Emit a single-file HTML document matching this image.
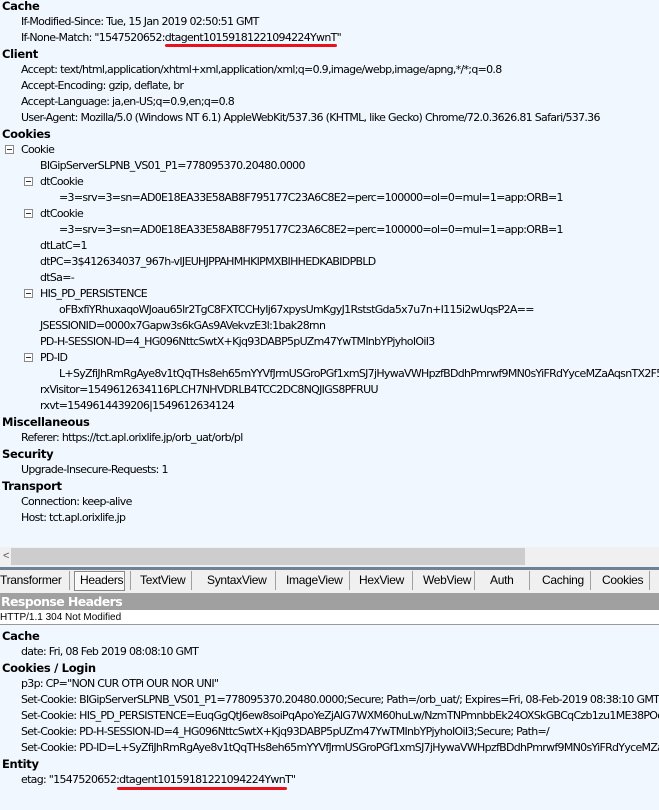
<!DOCTYPE html>
<html><head><meta charset="utf-8"><style>
*{margin:0;padding:0;box-sizing:border-box}
html,body{width:659px;height:810px;overflow:hidden}
body{background:#f0f7ff;font-family:"DejaVu Sans","Liberation Sans",sans-serif;font-size:11px;color:#000;position:relative}
#wrap{position:absolute;left:0;top:0;width:659px;height:810px;overflow:hidden}
.l{position:absolute;white-space:nowrap;line-height:16px;height:16px;letter-spacing:-0.7px}
.b{font-weight:bold;font-size:11.5px;letter-spacing:-0.3px}
.box{position:absolute;width:9px;height:9px;border:1px solid #8a8a8a;background:#fff}
.box:after{content:"";position:absolute;left:1px;top:3px;width:5px;height:1px;background:#333}
.red{position:absolute;height:3px;background:#e8121c;border-radius:2px}
.tab{position:absolute;top:569px;line-height:22px;font-family:"Liberation Sans",sans-serif;font-size:12px;letter-spacing:-0.3px}
.sep{position:absolute;top:571px;width:1px;height:19px;background:#a0a0a0}
</style></head><body><div id="wrap">
<div class="l b" style="left:2px;top:-2px">Cache</div>
<div class="l" style="left:21px;top:14px">If-Modified-Since: Tue, 15 Jan 2019 02:50:51 GMT</div>
<div class="l" style="left:21px;top:30px">If-None-Match: "1547520652:dtagent10159181221094224YwnT"</div>
<div class="red" style="left:165px;top:44px;width:172px"></div>
<div class="l b" style="left:2px;top:46px">Client</div>
<div class="l" style="left:21px;top:62px">Accept: text/html,application/xhtml+xml,application/xml;q=0.9,image/webp,image/apng,*/*;q=0.8</div>
<div class="l" style="left:21px;top:78px">Accept-Encoding: gzip, deflate, br</div>
<div class="l" style="left:21px;top:94px">Accept-Language: ja,en-US;q=0.9,en;q=0.8</div>
<div class="l" style="left:21px;top:110px">User-Agent: Mozilla/5.0 (Windows NT 6.1) AppleWebKit/537.36 (KHTML, like Gecko) Chrome/72.0.3626.81 Safari/537.36</div>
<div class="l b" style="left:2px;top:126px">Cookies</div>
<div class="box" style="left:5px;top:145px"></div>
<div class="l" style="left:21px;top:142px">Cookie</div>
<div class="l" style="left:40px;top:158px">BIGipServerSLPNB_VS01_P1=778095370.20480.0000</div>
<div class="box" style="left:24px;top:177px"></div>
<div class="l" style="left:40px;top:174px">dtCookie</div>
<div class="l" style="left:59px;top:190px">=3=srv=3=sn=AD0E18EA33E58AB8F795177C23A6C8E2=perc=100000=ol=0=mul=1=app:ORB=1</div>
<div class="box" style="left:24px;top:209px"></div>
<div class="l" style="left:40px;top:206px">dtCookie</div>
<div class="l" style="left:59px;top:222px">=3=srv=3=sn=AD0E18EA33E58AB8F795177C23A6C8E2=perc=100000=ol=0=mul=1=app:ORB=1</div>
<div class="l" style="left:40px;top:238px">dtLatC=1</div>
<div class="l" style="left:40px;top:254px">dtPC=3$412634037_967h-vIJEUHJPPAHMHKIPMXBIHHEDKABIDPBLD</div>
<div class="l" style="left:40px;top:270px">dtSa=-</div>
<div class="box" style="left:24px;top:289px"></div>
<div class="l" style="left:40px;top:286px">HIS_PD_PERSISTENCE</div>
<div class="l" style="left:59px;top:302px">oFBxfiYRhuxaqoWJoau65lr2TgC8FXTCCHyIj67xpysUmKgyJ1RststGda5x7u7n+I115i2wUqsP2A==</div>
<div class="l" style="left:40px;top:318px">JSESSIONID=0000x7Gapw3s6kGAs9AVekvzE3l:1bak28rnn</div>
<div class="l" style="left:40px;top:334px">PD-H-SESSION-ID=4_HG096NttcSwtX+Kjq93DABP5pUZm47YwTMInbYPjyhoIOiI3</div>
<div class="box" style="left:24px;top:353px"></div>
<div class="l" style="left:40px;top:350px">PD-ID</div>
<div class="l" style="left:59px;top:366px">L+SyZfiJhRmRgAye8v1tQqTHs8eh65mYYVfJrmUSGroPGf1xmSJ7jHywaVWHpzfBDdhPmrwf9MN0sYiFRdYyceMZaAqsnTX2F5EQ</div>
<div class="l" style="left:40px;top:382px">rxVisitor=1549612634116PLCH7NHVDRLB4TCC2DC8NQJIGS8PFRUU</div>
<div class="l" style="left:40px;top:398px">rxvt=1549614439206|1549612634124</div>
<div class="l b" style="left:2px;top:414px">Miscellaneous</div>
<div class="l" style="left:21px;top:430px">Referer: https://tct.apl.orixlife.jp/orb_uat/orb/pl</div>
<div class="l b" style="left:2px;top:446px">Security</div>
<div class="l" style="left:21px;top:462px">Upgrade-Insecure-Requests: 1</div>
<div class="l b" style="left:2px;top:478px">Transport</div>
<div class="l" style="left:21px;top:494px">Connection: keep-alive</div>
<div class="l" style="left:21px;top:510px">Host: tct.apl.orixlife.jp</div>

<div style="position:absolute;left:0;top:547px;width:659px;height:20px;background:#f0f0f0"></div>
<div style="position:absolute;left:3px;top:550px;font-size:11px;color:#555;font-family:'Liberation Sans',sans-serif">&lt;</div>
<div style="position:absolute;left:11px;top:548px;width:514px;height:17px;background:#cdcdcd"></div>
<div style="position:absolute;left:0;top:567px;width:659px;height:3px;background:#6e8196"></div>
<div style="position:absolute;left:0;top:570px;width:659px;height:23px;background:#f0f0f0"></div>
<div style="position:absolute;left:74px;top:571px;width:51px;height:20px;border:1px solid #888;background:#f8f8f8;box-shadow:inset 1px 1px 0 #fff"></div>
<div class="tab" style="left:0">Transformer</div>
<div class="tab" style="left:80px">Headers</div>
<div class="tab" style="left:140px">TextView</div>
<div class="tab" style="left:207px">SyntaxView</div>
<div class="tab" style="left:286px">ImageView</div>
<div class="tab" style="left:359px">HexView</div>
<div class="tab" style="left:423px">WebView</div>
<div class="tab" style="left:490px">Auth</div>
<div class="tab" style="left:542px">Caching</div>
<div class="tab" style="left:602px">Cookies</div>
<div class="sep" style="left:69px"></div><div class="sep" style="left:130px"></div><div class="sep" style="left:191px"></div><div class="sep" style="left:275px"></div><div class="sep" style="left:349px"></div><div class="sep" style="left:412px"></div><div class="sep" style="left:474px"></div><div class="sep" style="left:529px"></div><div class="sep" style="left:590px"></div><div class="sep" style="left:649px"></div>
<div style="position:absolute;left:0;top:593px;width:659px;height:17px;background:#a0a0a0;color:#fff;font-weight:bold;font-size:12.5px;line-height:17px;padding-left:1px;font-family:'DejaVu Sans',sans-serif;letter-spacing:-0.6px">Response Headers</div>
<div style="position:absolute;left:0;top:610px;width:659px;height:15px;background:#fff;font-size:10px;line-height:15px;font-family:'Liberation Sans',sans-serif;border-bottom:1px solid #999">HTTP/1.1 304 Not Modified</div>

<div class="l b" style="left:2px;top:628px">Cache</div>
<div class="l" style="left:21px;top:644px">date: Fri, 08 Feb 2019 08:08:10 GMT</div>
<div class="l b" style="left:2px;top:660px">Cookies / Login</div>
<div class="l" style="left:21px;top:676px">p3p: CP="NON CUR OTPi OUR NOR UNI"</div>
<div class="l" style="left:21px;top:692px">Set-Cookie: BIGipServerSLPNB_VS01_P1=778095370.20480.0000;Secure; Path=/orb_uat/; Expires=Fri, 08-Feb-2019 08:38:10 GMT</div>
<div class="l" style="left:21px;top:708px">Set-Cookie: HIS_PD_PERSISTENCE=EuqGgQtJ6ew8soiPqApoYeZjAlG7WXM60huLw/NzmTNPmnbbEk24OXSkGBCqCzb1zu1ME38POoOw</div>
<div class="l" style="left:21px;top:724px">Set-Cookie: PD-H-SESSION-ID=4_HG096NttcSwtX+Kjq93DABP5pUZm47YwTMInbYPjyhoIOiI3;Secure; Path=/</div>
<div class="l" style="left:21px;top:740px">Set-Cookie: PD-ID=L+SyZfiJhRmRgAye8v1tQqTHs8eh65mYYVfJrmUSGroPGf1xmSJ7jHywaVWHpzfBDdhPmrwf9MN0sYiFRdYyceMZaAqsnT</div>
<div class="l b" style="left:2px;top:756px">Entity</div>
<div class="l" style="left:21px;top:772px">etag: "1547520652:dtagent10159181221094224YwnT"</div>
<div class="red" style="left:117px;top:787px;width:170px"></div>
</div></body></html>
